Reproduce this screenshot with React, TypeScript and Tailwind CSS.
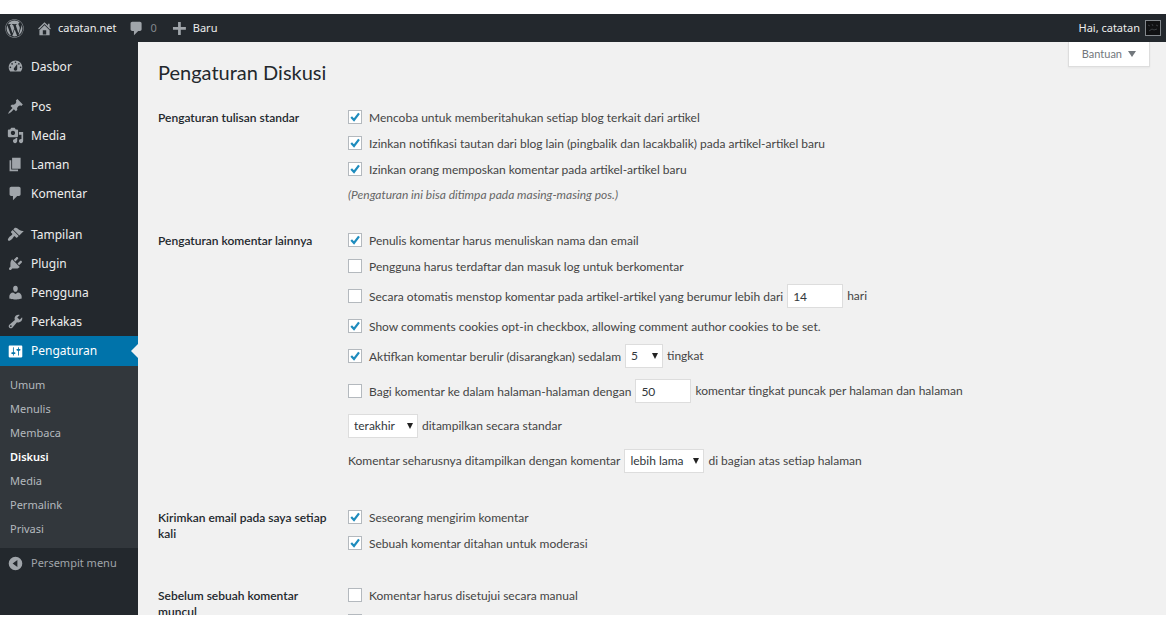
import React, { useId } from "react";
import { FaWordpress } from "react-icons/fa";

const icons = {
  dashboard:
    "M3.76 16h12.48c1.1-1.37 1.76-3.11 1.76-5 0-4.42-3.58-8-8-8s-8 3.58-8 8c0 1.89.66 3.63 1.76 5zM10 4c.55 0 1 .45 1 1s-.45 1-1 1-1-.45-1-1 .45-1 1-1zM6 6c.55 0 1 .45 1 1s-.45 1-1 1-1-.45-1-1 .45-1 1-1zm8 0c.55 0 1 .45 1 1s-.45 1-1 1-1-.45-1-1 .45-1 1-1zm-5.37 5.55L12 7v6c0 1.1-.9 2-2 2s-2-.9-2-2c0-.57.24-1.08.63-1.45zM4 10c.55 0 1 .45 1 1s-.45 1-1 1-1-.45-1-1 .45-1 1-1zm12 0c.55 0 1 .45 1 1s-.45 1-1 1-1-.45-1-1 .45-1 1-1z",
  pin: "M10.44 3.02l1.82-1.82 6.36 6.35-1.83 1.82c-1.05-.68-2.48-.57-3.41.36l-.75.75c-.92.93-1.04 2.35-.35 3.41l-1.83 1.82-2.41-2.41-2.8 2.79c-.42.42-3.38 2.71-3.8 2.29s1.86-3.39 2.28-3.81l2.79-2.79L4.1 9.36l1.83-1.82c1.05.69 2.48.57 3.4-.36l.75-.75c.93-.92 1.05-2.35.36-3.41z",
  media:
    "M13 11V4c0-.55-.45-1-1-1h-1.67L9 1H5L3.67 3H2c-.55 0-1 .45-1 1v7c0 .55.45 1 1 1h10c.55 0 1-.45 1-1zM7 4.5c1.38 0 2.5 1.12 2.5 2.5S8.38 9.5 7 9.5 4.5 8.38 4.5 7 5.62 4.5 7 4.5zM14 6h5v10.5c0 1.38-1.12 2.5-2.5 2.5S14 17.88 14 16.5s1.12-2.5 2.5-2.5c.17 0 .34.02.5.05V9h-3V6zm-4 8.05V13h2v3.5c0 1.38-1.12 2.5-2.5 2.5S7 17.88 7 16.5 8.12 14 9.5 14c.17 0 .34.02.5.05z",
  page: "M6 15V2h10v13H6zm-1 1h8v2H3V5h2v11z",
  comment:
    "M5 2h9c1.1 0 2 .9 2 2v7c0 1.1-.9 2-2 2h-2l-5 5v-5H5c-1.1 0-2-.9-2-2V4c0-1.1.9-2 2-2z",
  brush:
    "M14.48 11.06L7.41 3.99l1.5-1.5c.5-.56 2.3-.47 3.51.32 1.21.8 1.43 1.28 2.91 2.1 1.18.64 2.45 1.26 4.45.85zm-.71.71L6.7 4.7 4.93 6.47c-.39.39-.39 1.02 0 1.41l1.06 1.06c.39.39.39 1.03 0 1.42-.6.6-1.43 1.11-2.21 1.69-.35.26-.7.53-1.01.84C1.43 14.23.4 16.08 1.4 17.07c.99 1 2.84-.03 4.18-1.36.31-.31.58-.66.85-1.02.57-.78 1.08-1.61 1.69-2.21.39-.39 1.02-.39 1.41 0l1.06 1.06c.39.39 1.02.39 1.41 0z",
  plug: "M13.11 4.36L9.87 7.6 8 5.73l3.24-3.24c.35-.34 1.05-.2 1.56.32.52.51.66 1.21.31 1.55zm-8 1.77l.91-1.12 9.01 9.01-1.19.84c-.71.71-2.63 1.16-3.82 1.16H6.14L4.9 17.26c-.59.59-1.54.59-2.12 0-.59-.58-.59-1.53 0-2.12l1.24-1.24v-3.88c0-1.13.4-3.19 1.09-3.89zm7.26 3.97l3.24-3.24c.34-.35 1.04-.21 1.55.31.52.51.66 1.21.31 1.55l-3.24 3.25z",
  user: "M10 9.25c-2.27 0-2.73-3.44-2.73-3.44C7 4.02 7.82 2 9.97 2c2.16 0 2.98 2.02 2.71 3.81 0 0-.41 3.44-2.68 3.44zm0 2.57L12.72 10c2.39 0 4.52 2.33 4.52 4.53v2.49s-3.65 1.13-7.24 1.13c-3.65 0-7.24-1.13-7.24-1.13v-2.49c0-2.25 1.94-4.48 4.47-4.48z",
  wrench:
    "M16.68 9.77c-1.34 1.34-3.3 1.67-4.95.99l-5.41 6.52c-.99.99-2.59.99-3.58 0s-.99-2.59 0-3.57l6.52-5.42c-.68-1.65-.35-3.61.99-4.95 1.28-1.28 3.12-1.62 4.72-1.06l-2.89 2.89 2.82 2.82 2.86-2.87c.53 1.58.18 3.39-1.08 4.65zM3.81 16.21c.4.39 1.04.39 1.43 0 .4-.4.4-1.04 0-1.43-.39-.4-1.03-.4-1.43 0-.39.39-.39 1.03 0 1.43z",
  sliders:
    "M18 16V4c0-.55-.45-1-1-1H3c-.55 0-1 .45-1 1v12c0 .55.45 1 1 1h14c.55 0 1-.45 1-1zM8 11h1c.55 0 1 .45 1 1s-.45 1-1 1H8v1.5c0 .28-.22.5-.5.5s-.5-.22-.5-.5V13H6c-.55 0-1-.45-1-1s.45-1 1-1h1V5.5c0-.28.22-.5.5-.5s.5.22.5.5V11zm5-2h-1c-.55 0-1-.45-1-1s.45-1 1-1h1V5.5c0-.28.22-.5.5-.5s.5.22.5.5V7h1c.55 0 1 .45 1 1s-.45 1-1 1h-1v5.5c0 .28-.22.5-.5.5s-.5-.22-.5-.5V9z",
  home: "M16 8.5l1.53 1.53-1.06 1.06L10 4.6l-6.47 6.49-1.06-1.06L10 2.5l4 4v-2h2v4zm-6-2.46l6 5.99V18H4v-5.97zM12 17v-5H8v5h4z",
  plus: "M17.5 8.3v3.2h-6v6H8.3v-6h-6V8.3h6v-6h3.2v6h6z",
  collapse: "M10 2a8 8 0 1 0 0 16 8 8 0 0 0 0-16zm2.2 12L6.6 10l5.6-4v8z",
};

type IconName = keyof typeof icons;

function Icon({ name, className = "" }: { name: IconName; className?: string }) {
  return (
    <svg
      viewBox="0 0 20 20"
      aria-hidden="true"
      className={`h-[17px] w-[17px] shrink-0 fill-current ${className}`}
    >
      <path fillRule="evenodd" d={icons[name]} />
    </svg>
  );
}

function AdminBar() {
  return (
    <header className="flex h-7 shrink-0 items-center justify-between bg-[#23282d] pr-[5px] pl-[5px] text-[11px] text-[#eee]">
      <nav className="flex items-center" aria-label="Bilah alat">
        <a href="#wordpress" aria-label="WordPress" className="mr-[12px] text-[#a0a5aa]">
          <FaWordpress className="h-[19px] w-[19px]" />
        </a>
        <a href="#situs" className="mr-[12px] flex items-center gap-[5px]">
          <Icon name="home" className="text-[#a0a5aa]" />
          catatan.net
        </a>
        <a href="#komentar" className="mr-[14px] flex items-center gap-[5px] text-[#82878c]">
          <Icon name="comment" className="text-[#a0a5aa]" />0
        </a>
        <a href="#baru" className="flex items-center gap-[5px]">
          <Icon name="plus" className="text-[#a0a5aa]" />
          Baru
        </a>
      </nav>
      <a href="#profil" className="flex items-center gap-[5px]">
        Hai, catatan
        <svg viewBox="0 0 16 16" aria-hidden="true" className="h-4 w-4">
          <rect x="0.5" y="0.5" width="15" height="15" fill="#101113" stroke="#82878c" />
          <path d="M3 5l2 1m6-1l2 1M4 11l3-2 2 1 3-1M7 4l1 2" stroke="#3a3e42" fill="none" />
        </svg>
      </a>
    </header>
  );
}

function MenuItem({ icon, label }: { icon: IconName; label: string }) {
  return (
    <li>
      <a href={`#${label}`} className="flex h-[29px] items-center gap-[7px] pl-[7px] text-[#eee]">
        <Icon name={icon} className="text-[#a0a5aa]" />
        {label}
      </a>
    </li>
  );
}

const submenu = ["Umum", "Menulis", "Membaca", "Diskusi", "Media", "Permalink", "Privasi"];

function Sidebar() {
  return (
    <nav aria-label="Menu utama" className="w-[138px] shrink-0 bg-[#23282d] pt-[10px] text-[12px]">
      <ul>
        <MenuItem icon="dashboard" label="Dasbor" />
      </ul>
      <ul className="mt-[11px]">
        <MenuItem icon="pin" label="Pos" />
        <MenuItem icon="media" label="Media" />
        <MenuItem icon="page" label="Laman" />
        <MenuItem icon="comment" label="Komentar" />
      </ul>
      <ul className="mt-[12px]">
        <MenuItem icon="brush" label="Tampilan" />
        <MenuItem icon="plug" label="Plugin" />
        <MenuItem icon="user" label="Pengguna" />
        <MenuItem icon="wrench" label="Perkakas" />
        <li>
          <a
            href="#Pengaturan"
            className="flex h-[30px] items-center gap-[7px] bg-[#0073aa] pl-[7px] text-white"
          >
            <Icon name="sliders" />
            Pengaturan
            <svg viewBox="0 0 7 14" aria-hidden="true" className="ml-auto h-[14px] w-[7px] fill-[#f1f1f1]">
              <path d="M7 0v14L0 7z" />
            </svg>
          </a>
          <ul className="bg-[#32373c] py-[7px] text-[11px]">
            {submenu.map((label) => (
              <li key={label}>
                <a
                  href={`#sub-${label}`}
                  className={
                    label === "Diskusi"
                      ? "flex h-6 items-center pl-[10px] font-semibold text-white"
                      : "flex h-6 items-center pl-[10px] text-[#b4b9be]"
                  }
                >
                  {label}
                </a>
              </li>
            ))}
          </ul>
        </li>
      </ul>
      <button
        type="button"
        className="flex h-[30px] items-center gap-[7px] pl-[7px] text-[11px] text-[#a0a5aa]"
      >
        <Icon name="collapse" />
        Persempit menu
      </button>
    </nav>
  );
}

function Checkbox({ id, checked }: { id: string; checked?: boolean }) {
  return (
    <span className="grid h-[14px] w-[14px] shrink-0">
      <input
        id={id}
        type="checkbox"
        defaultChecked={checked}
        className="peer col-start-1 row-start-1 h-[14px] w-[14px] appearance-none border border-[#b4b9be] bg-white"
      />
      <svg
        viewBox="0 0 14 14"
        aria-hidden="true"
        className="pointer-events-none invisible col-start-1 row-start-1 h-[14px] w-[14px] peer-checked:visible"
      >
        <path d="M3.2 7l2.8 3 5-6.6" fill="none" stroke="#1e8cbe" strokeWidth="2.2" />
      </svg>
    </span>
  );
}

function CheckRow({
  label,
  checked,
  tall,
  children,
}: {
  label: string;
  checked?: boolean;
  tall?: boolean;
  children?: React.ReactNode;
}) {
  const id = useId();
  return (
    <div className={tall ? "flex h-[34px] items-center" : "flex h-[26px] items-center"}>
      <Checkbox id={id} checked={checked} />
      <label htmlFor={id} className="ml-[7px] pt-[2px] whitespace-nowrap">
        {label}
      </label>
      {children}
    </div>
  );
}

function NumberBox({ value, label }: { value: string; label: string }) {
  return (
    <input
      type="text"
      inputMode="numeric"
      aria-label={label}
      defaultValue={value}
      className="mx-[4px] h-6 w-14 border border-[#ddd] bg-white px-[5px] text-[#32373c]"
    />
  );
}

function Select({ options, label, className }: { options: string[]; label: string; className: string }) {
  return (
    <span className={`relative mr-[4px] flex h-6 ${className}`}>
      <select
        aria-label={label}
        className="h-6 w-full appearance-none border border-[#ddd] bg-white pl-[5px] text-[#32373c]"
      >
        {options.map((o) => (
          <option key={o}>{o}</option>
        ))}
      </select>
      <svg
        viewBox="0 0 6 6"
        aria-hidden="true"
        className="pointer-events-none absolute top-[9px] right-[5px] h-[6px] w-[6px] fill-[#222]"
      >
        <path d="M0 0h6L3 6z" />
      </svg>
    </span>
  );
}

function Section({
  title,
  className,
  children,
}: {
  title: string;
  className: string;
  children: React.ReactNode;
}) {
  return (
    <section className={`flex ${className}`}>
      <h2 className="w-[190px] shrink-0 pt-[6px] pr-5 text-[12px] leading-4 font-semibold text-[#23282d]">
        {title}
      </h2>
      <div className="min-w-0 flex-1">{children}</div>
    </section>
  );
}

export default function App() {
  return (
    <div className="flex h-screen flex-col overflow-hidden bg-white pt-[14px] pb-[11px] font-['Noto_Sans','Open_Sans',sans-serif]">
      <AdminBar />
      <div className="flex min-h-0 flex-1 overflow-hidden bg-[#f1f1f1]">
        <Sidebar />
        <main className="min-w-0 flex-1 pl-[20px] font-['Lato','Open_Sans',sans-serif] text-[12px] text-[#444]">
          <div className="flex items-start justify-between pr-4">
            <h1 className="pt-[16px] text-[20px] leading-7 text-[#23282d]">Pengaturan Diskusi</h1>
            <button
              type="button"
              className="flex h-[25px] items-center gap-[6px] border border-t-0 border-[#ddd] bg-white px-[13px] text-[11px] text-[#72777c] shadow-xs"
            >
              Bantuan
              <svg viewBox="0 0 8 6" aria-hidden="true" className="h-[6px] w-[8px] fill-[#72777c]">
                <path d="M0 0h8L4 6z" />
              </svg>
            </button>
          </div>
          <form className="pt-[18px]">
            <Section title="Pengaturan tulisan standar" className="pb-[19px]">
              <CheckRow checked label="Mencoba untuk memberitahukan setiap blog terkait dari artikel" />
              <CheckRow
                checked
                label="Izinkan notifikasi tautan dari blog lain (pingbalik dan lacakbalik) pada artikel-artikel baru"
              />
              <CheckRow checked label="Izinkan orang memposkan komentar pada artikel-artikel baru" />
              <p className="flex h-[26px] items-center text-[#666] italic">
                (Pengaturan ini bisa ditimpa pada masing-masing pos.)
              </p>
            </Section>
            <Section title="Pengaturan komentar lainnya" className="pb-[26px]">
              <CheckRow checked label="Penulis komentar harus menuliskan nama dan email" />
              <CheckRow label="Pengguna harus terdaftar dan masuk log untuk berkomentar" />
              <CheckRow
                tall
                label="Secara otomatis menstop komentar pada artikel-artikel yang berumur lebih dari"
              >
                <NumberBox value="14" label="Jumlah hari" />
                <span>hari</span>
              </CheckRow>
              <CheckRow
                checked
                label="Show comments cookies opt-in checkbox, allowing comment author cookies to be set."
              />
              <CheckRow checked tall label="Aktifkan komentar berulir (disarangkan) sedalam">
                <Select options={["5", "2", "3", "4", "6"]} label="Kedalaman" className="ml-[4px] w-[38px]" />
                <span>tingkat</span>
              </CheckRow>
              <div className="pt-px">
                <CheckRow tall label="Bagi komentar ke dalam halaman-halaman dengan">
                  <NumberBox value="50" label="Komentar per halaman" />
                  <span>komentar tingkat puncak per halaman dan halaman</span>
                </CheckRow>
                <div className="flex h-[35px] items-center">
                  <Select options={["terakhir", "pertama"]} label="Halaman standar" className="w-[70px]" />
                  <span>ditampilkan secara standar</span>
                </div>
                <div className="flex h-[35px] items-center">
                  <span>Komentar seharusnya ditampilkan dengan komentar</span>
                  <Select options={["lebih lama", "lebih baru"]} label="Urutan" className="ml-[4px] w-[80px]" />
                  <span>di bagian atas setiap halaman</span>
                </div>
              </div>
            </Section>
            <Section title="Kirimkan email pada saya setiap kali" className="pb-[26px]">
              <CheckRow checked label="Seseorang mengirim komentar" />
              <CheckRow checked label="Sebuah komentar ditahan untuk moderasi" />
            </Section>
            <Section title="Sebelum sebuah komentar muncul" className="pb-[26px]">
              <CheckRow label="Komentar harus disetujui secara manual" />
              <CheckRow label="Penulis komentar harus memiliki komentar yang disetujui sebelumnya" />
            </Section>
          </form>
        </main>
      </div>
    </div>
  );
}
